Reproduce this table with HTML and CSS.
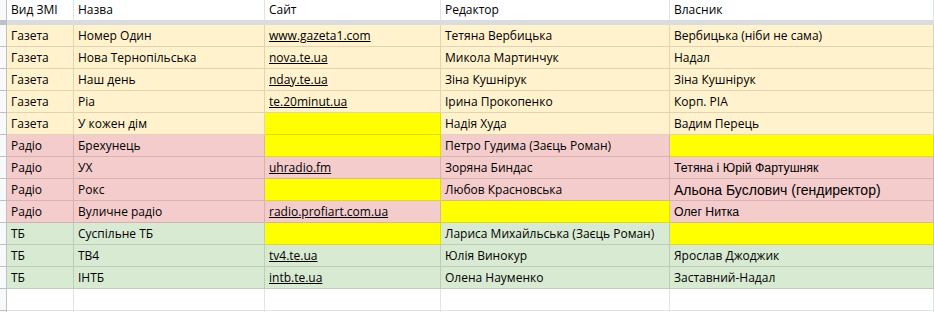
FILE: index.html
```html
<!DOCTYPE html>
<html lang="uk">
<head>
<meta charset="utf-8">
<title>ЗМІ</title>
<link rel="stylesheet" href="styles.css">
</head>
<body>
<div class="sheet">
  <div class="row head">
    <div class="gut"></div>
    <div class="c">Вид ЗМІ</div>
    <div class="c">Назва</div>
    <div class="c">Сайт</div>
    <div class="c">Редактор</div>
    <div class="c">Власник</div>
  </div>
  <div class="freeze"><div class="fg"></div><div class="fr"></div></div>

  <div class="row beige">
    <div class="gut"></div>
    <div class="c">Газета</div><div class="c">Номер Один</div>
    <div class="c"><a href="#">www.gazeta1.com</a></div>
    <div class="c">Тетяна Вербицька</div><div class="c">Вербицька (ніби не сама)</div>
  </div>
  <div class="row beige">
    <div class="gut"></div>
    <div class="c">Газета</div><div class="c">Нова Тернопільська</div>
    <div class="c"><a href="#">nova.te.ua</a></div>
    <div class="c">Микола Мартинчук</div><div class="c">Надал</div>
  </div>
  <div class="row beige">
    <div class="gut"></div>
    <div class="c">Газета</div><div class="c">Наш день</div>
    <div class="c"><a href="#">nday.te.ua</a></div>
    <div class="c">Зіна Кушнірук</div><div class="c">Зіна Кушнірук</div>
  </div>
  <div class="row beige">
    <div class="gut"></div>
    <div class="c">Газета</div><div class="c">Ріа</div>
    <div class="c"><a href="#">te.20minut.ua</a></div>
    <div class="c">Ірина Прокопенко</div><div class="c">Корп. РІА</div>
  </div>
  <div class="row beige">
    <div class="gut"></div>
    <div class="c">Газета</div><div class="c">У кожен дім</div>
    <div class="c y"></div>
    <div class="c">Надія Худа</div><div class="c">Вадим Перець</div>
  </div>

  <div class="row pink">
    <div class="gut"></div>
    <div class="c">Радіо</div><div class="c">Брехунець</div>
    <div class="c y"></div>
    <div class="c">Петро Гудима (Заєць Роман)</div><div class="c y"></div>
  </div>
  <div class="row pink">
    <div class="gut"></div>
    <div class="c">Радіо</div><div class="c">УХ</div>
    <div class="c"><a href="#">uhradio.fm</a></div>
    <div class="c">Зоряна Биндас</div><div class="c alt">Тетяна і Юрій Фартушняк</div>
  </div>
  <div class="row pink">
    <div class="gut"></div>
    <div class="c">Радіо</div><div class="c">Рокс</div>
    <div class="c y"></div>
    <div class="c">Любов Красновська</div><div class="c big">Альона Буслович (гендиректор)</div>
  </div>
  <div class="row pink">
    <div class="gut"></div>
    <div class="c">Радіо</div><div class="c">Вуличне радіо</div>
    <div class="c"><a href="#">radio.profiart.com.ua</a></div>
    <div class="c y"></div><div class="c alt">Олег Нитка</div>
  </div>

  <div class="row green">
    <div class="gut"></div>
    <div class="c">ТБ</div><div class="c">Суспільне ТБ</div>
    <div class="c y"></div>
    <div class="c">Лариса Михайльська (Заєць Роман)</div><div class="c y"></div>
  </div>
  <div class="row green">
    <div class="gut"></div>
    <div class="c">ТБ</div><div class="c">ТВ4</div>
    <div class="c"><a href="#">tv4.te.ua</a></div>
    <div class="c">Юлія Винокур</div><div class="c">Ярослав Джоджик</div>
  </div>
  <div class="row green">
    <div class="gut"></div>
    <div class="c">ТБ</div><div class="c">ІНТБ</div>
    <div class="c"><a href="#">intb.te.ua</a></div>
    <div class="c">Олена Науменко</div><div class="c">Заставний-Надал</div>
  </div>
  <div class="row blank">
    <div class="gut"></div>
    <div class="c"></div><div class="c"></div><div class="c"></div><div class="c"></div><div class="c"></div>
  </div>
  <div class="row blank">
    <div class="gut"></div>
    <div class="c"></div><div class="c"></div><div class="c"></div><div class="c"></div><div class="c"></div>
  </div>
</div>
</body>
</html>
```

FILE: styles.css
```css
html, body {
  margin: 0;
  padding: 0;
  background: #ffffff;
  overflow: hidden;
}

.sheet {
  width: 934px;
  height: 312px;
  overflow: hidden;
  font-family: "Open Sans", "Liberation Sans", sans-serif;
  font-size: 12px;
  color: #000000;
}

.row {
  display: grid;
  grid-template-columns: 7px 67px 191px 176px 229px 264px;
  height: 22px;
}

.row .c {
  box-sizing: border-box;
  height: 22px;
  padding: 1px 3px 0 4px;
  line-height: 20px;
  white-space: nowrap;
  overflow: hidden;
  border-right: 1px solid rgba(0, 0, 0, 0.12);
  border-bottom: 1px solid rgba(0, 0, 0, 0.12);
}

.gut {
  box-sizing: border-box;
  background: #f8f9fa;
  border-right: 1px solid #c0c0c0;
  border-bottom: 1px solid #c0c0c0;
}

.head {
  height: 20px;
}
.head .c {
  height: 20px;
  padding-top: 0;
  border-bottom: none;
  border-right-color: #e2e3e3;
}
.head .gut {
  border-bottom: none;
}

.freeze {
  display: grid;
  grid-template-columns: 7px 1fr;
  height: 5px;
}
.fg { background: #bdc1c6; }
.fr { background: #dadce0; }

.beige .c { background: #fff2cc; }
.pink .c { background: #f4cccc; }
.green .c { background: #d9ead3; }
.row .c.y { background: #ffff00; }
.blank .c { background: #ffffff; border-color: #e2e3e3; }

.c a {
  color: #000000;
  text-decoration: underline;
}

.c.big {
  font-family: "Liberation Sans", Arial, sans-serif;
  font-size: 14px;
}
.c.alt {
  font-family: "Liberation Sans", Arial, sans-serif;
  font-size: 12.3px;
}
```
